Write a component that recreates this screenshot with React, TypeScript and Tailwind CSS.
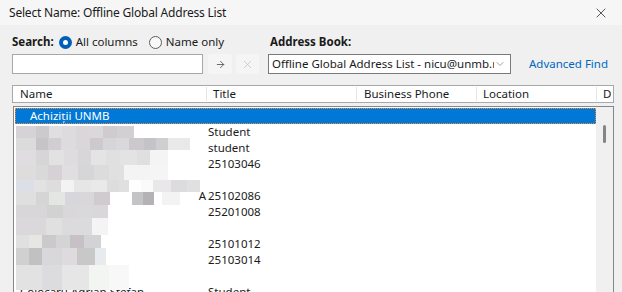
import { X, ArrowRight, ChevronDown } from 'lucide-react';

type Tile = [number, string];

// pixelated name column (privacy mosaic in the screenshot)
const MOSAIC: { h: number; tiles: Tile[] }[] = [
  { h: 12, tiles: [[20, '#d5d3d5'], [13, '#cccacc'], [13, '#dfdfe2'], [14, '#dddbdd'], [13, '#d9d7d9'], [14, '#dad8da'], [14, '#cfcbcf'], [17, '#d2d0d2']] },
  { h: 12, tiles: [[20, '#dcdbdb'], [12, '#c6c4c7'], [13, '#d0ced0'], [15, '#dddbdd'], [14, '#d9d7da'], [13, '#cdc9cd'], [13, '#d6d6d9'], [13, '#dad8da'], [15, '#cbc9cb'], [12, '#c5c3c7'], [12, '#cfcfd2'], [22, '#e9e9e9']] },
  { h: 15, tiles: [[20, '#dfdddf'], [13, '#d6d6d6'], [15, '#e2e2e2'], [14, '#dedcdf'], [13, '#d8d6d9'], [15, '#e4e4e4'], [14, '#e0e0e0'], [17, '#e3e3e3'], [13, '#dfdfdf'], [18, '#f3f4f3']] },
  { h: 15, tiles: [[20, '#dedcdd'], [12, '#d9d9d9'], [14, '#d5d1d5'], [16, '#e0dee0'], [16, '#d6d5d8'], [15, '#dcdcdc'], [15, '#e0e0e0'], [26, '#f4f4f4'], [18, '#f4f5f4']] },
  { h: 12, tiles: [[18, '#dce0e6'], [12, '#e2e2e2'], [15, '#dddddd'], [13, '#f2f3f2'], [17, '#e6e6e6'], [16, '#e9e9e9'], [12, '#dddddd'], [10, '#e0e0e0'], [12, '#fefefe'], [12, '#fafafa'], [18, '#e9e7e9'], [16, '#dcdcdf'], [13, '#e0e0e0']] },
  { h: 13, tiles: [[20, '#dfdfdf'], [13, '#d5d5d5'], [16, '#e4e6e4'], [15, '#d6d6dc'], [14, '#d9d7d9'], [16, '#cfcbcf'], [22, '#ffffff'], [11, '#c4c3c6'], [11, '#b4b2b5'], [8, '#ffffff'], [18, '#f3f3f3']] },
  { h: 13, tiles: [[15, '#d8d6d8'], [16, '#d8d6d8'], [16, '#d2d2d2'], [14, '#d9d7da'], [15, '#d9d9da'], [16, '#d9d7da']] },
  { h: 17, tiles: [[15, '#dad8da'], [15, '#dad8da'], [16, '#e0e0e0'], [15, '#dbdbde'], [15, '#dbdbde'], [16, '#f4f4f4']] },
  { h: 13, tiles: [[13, '#e0e0e0'], [13, '#e6e6e2'], [14, '#cbc9cc'], [14, '#d4d4d4'], [14, '#c7c1c7'], [17, '#d3d3d5'], [7, '#ffffff']] },
  { h: 17, tiles: [[13, '#d0d0d0'], [13, '#c1c1c1'], [20, '#d8d8db'], [15, '#dedadd'], [18, '#c8c8c8'], [11, '#e8ebee']] },
  { h: 25, tiles: [[26, '#e2e2e2'], [20, '#dcdcdf'], [27, '#e6e6e6'], [20, '#f3f5f3'], [20, '#f8f8f8']] },
];

const ROWS = [
  { name: 'Ţ', title: 'Student' },
  { name: '', title: 'student' },
  { name: '', title: '25103046' },
  { name: '', title: '' },
  { name: '', title: '25102086', tail: 'A' },
  { name: '', title: '25201008' },
  { name: '', title: '' },
  { name: '', title: '25101012' },
  { name: '', title: '25103014' },
  { name: '', title: '' },
  { name: 'Cojocaru Adrian Ştefan', title: 'Student' },
];

function Radio({ checked, label }: { checked?: boolean; label: string }) {
  return (
    <label className="flex items-center gap-[4px]">
      {checked ? (
        <span className="w-[13px] h-[13px] rounded-full bg-[#005fb8] flex items-center justify-center">
          <span className="w-[5px] h-[5px] rounded-full bg-white" />
        </span>
      ) : (
        <span className="w-[13px] h-[13px] rounded-full border border-[#5d5d5d] bg-[#f8f8f8]" />
      )}
      <span>{label}</span>
    </label>
  );
}

export default function App() {
  return (
    <div className="w-[622px] h-[292px] overflow-hidden bg-[#f0f0f0] text-[11.5px] text-[#1a1a1a] font-['Noto_Sans',sans-serif] flex flex-col">
      {/* title bar */}
      <div className="h-[25px] shrink-0 bg-[#f6f6f6] flex items-center justify-between pl-[9px] pr-[13px]">
        <span className="text-[12px] leading-none pt-[1px] tracking-[-0.2px]">Select Name: Offline Global Address List</span>
        <X className="w-[16px] h-[16px] text-[#1a1a1a]" strokeWidth={1.1} />
      </div>

      {/* search controls */}
      <div className="flex pl-[12px] pt-[9px]">
        <div className="flex flex-col w-[256px]">
          <div className="flex items-center gap-[5px] h-[16px]">
            <span className="font-bold">Search:</span>
            <Radio checked label="All columns" />
            <span className="w-[1px]" />
            <Radio label="Name only" />
          </div>
          <div className="flex items-center gap-[4px] mt-[4px]">
            <div className="w-[191px] h-[20px] bg-white border border-[#a8a8a8]" />
            <div className="w-[24px] h-[20px] rounded-[3px] bg-[#f5f5f5] flex items-center justify-center ml-[1px]">
              <ArrowRight className="w-[11px] h-[11px] text-[#5e5e5e]" strokeWidth={2} />
            </div>
            <div className="w-[23px] h-[20px] rounded-[3px] bg-[#f5f5f5] flex items-center justify-center">
              <X className="w-[13px] h-[13px] text-[#bdbdbd]" strokeWidth={1.3} />
            </div>
          </div>
        </div>
        <div className="flex flex-col pl-[2px]">
          <div className="h-[16px] flex items-center font-bold">Address Book:</div>
          <div className="flex items-center mt-[4px] -ml-[2px]">
            <div className="w-[243px] h-[20px] bg-white border border-[#7a7a7a] flex items-center pl-[3px] pr-[4px]">
              <span className="flex-1 whitespace-nowrap overflow-hidden">Offline Global Address List - nicu@unmb.r</span>
              <ChevronDown className="w-[12px] h-[12px] text-[#6e6e6e]" strokeWidth={1.3} />
            </div>
            <span className="ml-[18px] text-[#0067c0]">Advanced Find</span>
          </div>
        </div>
      </div>

      {/* list header */}
      <div className="ml-[12px] mt-[11px] w-[602px] h-[18px] shrink-0 bg-white border border-[#a8a8a8] flex items-center">
        <div className="w-[194px] pl-[7px] border-r border-[#e5e5e5] h-[14px] flex items-center">Name</div>
        <div className="w-[150px] pl-[6px] border-r border-[#e5e5e5] h-[14px] flex items-center">Title</div>
        <div className="w-[120px] pl-[7px] border-r border-[#e5e5e5] h-[14px] flex items-center">Business Phone</div>
        <div className="w-[120px] pl-[6px] border-r border-[#e5e5e5] h-[14px] flex items-center">Location</div>
        <div className="pl-[6px]">D</div>
      </div>

      {/* list body */}
      <div className="ml-[13px] mt-[3px] w-[601px] flex-1 bg-white border-l border-t border-r border-[#828790] flex">
        <div className="relative flex-1 pt-[1px] pl-[1px]">
          <div className="h-[16px] border border-dotted border-[#ff8c28] bg-[#0078d7] text-white flex items-center pl-[14px] leading-none">
            Achiziții UNMB
          </div>
          {ROWS.map((r, i) => (
            <div key={i} className="h-[16px] flex items-center leading-none">
              <div className="w-[193px] pl-[5px] flex justify-between pr-[2px] whitespace-nowrap overflow-hidden">
                <span>{r.name}</span>
                <span>{r.tail}</span>
              </div>
              <div>{r.title}</div>
            </div>
          ))}
          {/* mosaic over names */}
          <div className="absolute left-[2px] top-[19px] flex flex-col">
            {MOSAIC.map((m, i) => (
              <div key={i} className="flex" style={{ height: m.h }}>
                {m.tiles.map(([w, c], j) => (
                  <div key={j} style={{ width: w, background: c }} />
                ))}
              </div>
            ))}
          </div>
        </div>
        {/* scrollbar */}
        <div className="w-[17px] bg-[#f0f0f0] flex justify-center pt-[18px]">
          <div className="w-[3px] h-[18px] rounded-full bg-[#858585]" />
        </div>
      </div>
    </div>
  );
}
